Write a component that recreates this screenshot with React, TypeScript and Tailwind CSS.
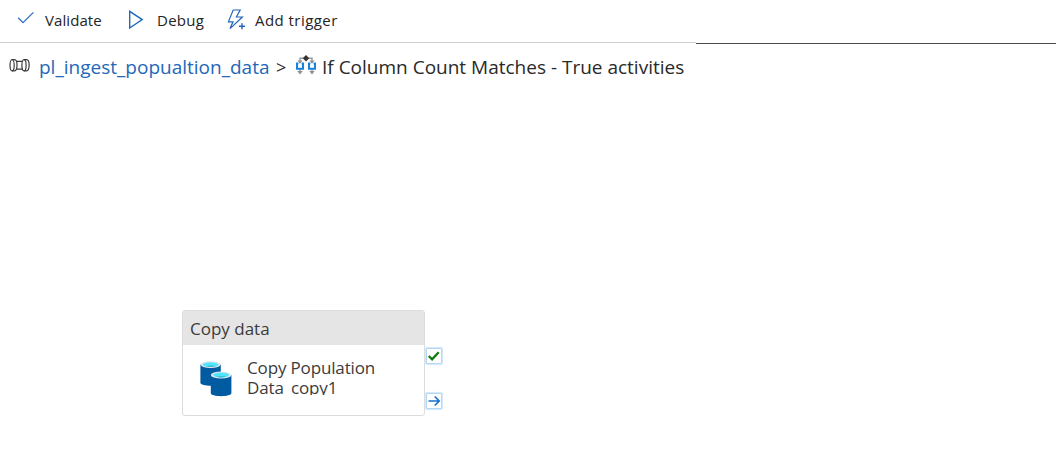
import type { ReactNode } from "react";

function CheckIcon() {
  return (
    <svg width="18" height="14" viewBox="0 0 18 14" fill="none" stroke="#2f6fc0" strokeWidth="1.3">
      <path d="M1.2 6.8 6 11.6 16.4 1.4" />
    </svg>
  );
}

function PlayIcon() {
  return (
    <svg width="16" height="20" viewBox="0 0 16 20" fill="none" stroke="#1f68bd" strokeWidth="1.4">
      <path d="M1.7 1.3V18L14.2 9.6Z" />
    </svg>
  );
}

function TriggerIcon() {
  return (
    <svg width="20" height="22" viewBox="0 0 20 22" fill="none" stroke="#2467b8" strokeWidth="1.2">
      <path d="M6.2 1h7L9.4 8h6L3 19.6 6 12.8H1.4Z" />
      <path d="M15 14.2v6M12 17.2h6" strokeWidth="1.4" />
    </svg>
  );
}

function PipelineIcon() {
  return (
    <svg width="22" height="15" viewBox="0 0 22 15" fill="none" stroke="#3b3b3b" strokeWidth="1.2">
      <ellipse cx="3.1" cy="7.3" rx="2.1" ry="5.6" />
      <path d="M3.1 1.7h2.4c3.4 0 3.4 11.2 0 11.2H3.1M7.6 3.4h6M7.6 11.2h6" />
      <ellipse cx="15" cy="7.3" rx="2.1" ry="5.6" />
      <path d="M15 1.7h2.6c3.4 0 3.4 11.2 0 11.2H15" />
    </svg>
  );
}

function BranchIcon() {
  return (
    <svg width="22" height="20" viewBox="0 0 22 20" fill="none">
      <path d="M5 8V3.2h12V8M5 14v4M17 14v4" stroke="#999" strokeWidth="1.4" />
      <path d="M2.4 5.6h5.2L5 8.8ZM14.4 5.6h5.2L17 8.8ZM2.2 16h5.6L5 19.4ZM14.2 16h5.6L17 19.4Z" fill="#929292" />
      <path d="M11 0 14.2 3.2 11 6.4 7.8 3.2Z" fill="#333" />
      <path d="M3.4 8.6H2v5.2h6V8.6H6.6M15.4 8.6H14v5.2h6V8.6h-1.4" stroke="#1683dc" strokeWidth="2" />
    </svg>
  );
}

function DatabaseIcon() {
  return (
    <svg width="32" height="36" viewBox="0 0 32 36">
      <path d="M.4 3.6v18.2c0 4 20.4 4 20.4 0V3.6Z" fill="#005ba1" />
      <ellipse cx="10.6" cy="3.6" rx="10.2" ry="3.4" fill="#e8e8e8" />
      <ellipse cx="10.6" cy="3.6" rx="8" ry="2.4" fill="#50e6ff" />
      <path d="M5.5 5.2c2.5-1.1 7.7-1.1 10.2 0-2.5 1-7.7 1-10.2 0Z" fill="#3fbbd8" />
      <path d="M10.8 14v18c0 4.2 20.6 4.2 20.6 0V14Z" fill="#005ba1" />
      <ellipse cx="21.1" cy="14" rx="10.3" ry="3.6" fill="#e8e8e8" />
      <ellipse cx="21.1" cy="14" rx="8" ry="2.5" fill="#50e6ff" />
      <path d="M16 15.7c2.5-1.1 7.7-1.1 10.2 0-2.5 1-7.7 1-10.2 0Z" fill="#3fbbd8" />
    </svg>
  );
}

function Port({ children }: { children: ReactNode }) {
  return (
    <div className="flex size-4 items-center justify-center rounded-[1px] border border-[#b3d8f5] bg-white shadow-[0_0_1px_1px_#d0e7fa]">
      {children}
    </div>
  );
}

function Toolbar() {
  return (
    <div className="flex h-[42px] items-center pl-[17px] pb-[2px] text-[15px] text-[#242424]">
      <span className="flex w-[28px] pb-1"><CheckIcon /></span>
      <span className="w-[83px] tracking-[0.08px]">Validate</span>
      <span className="flex w-[29px] pb-[1px]"><PlayIcon /></span>
      <span className="w-[70px] tracking-[0.25px]">Debug</span>
      <span className="flex w-[28px] pb-px"><TriggerIcon /></span>
      <span className="tracking-[0.45px]">Add trigger</span>
    </div>
  );
}

function Breadcrumb() {
  return (
    <div className="flex h-[46px] items-center pl-[9px] text-[19px] text-[#292929]">
      <span className="flex w-[30px] pb-[3px]"><PipelineIcon /></span>
      <span className="w-[237px] text-[#2467b8]">pl_ingest_popualtion_data</span>
      <span className="w-[19px] pt-px text-[18px]">&gt;</span>
      <span className="flex w-[27px] pb-[4px]"><BranchIcon /></span>
      <span>If Column Count Matches - True activities</span>
    </div>
  );
}

function Activity() {
  return (
    <div className="flex">
      <div className="h-[106px] w-[243px] overflow-hidden rounded-[3px] border border-[#dcdcdc] bg-white text-[#3b3b3b]">
        <div className="h-[34px] bg-[#e5e5e5] pl-[7px] text-[17px] leading-[35px]">Copy data</div>
        <div className="flex pt-[13px] pl-[17px]">
          <span className="w-[47px] pt-[3px]"><DatabaseIcon /></span>
          <div className="h-[37px] overflow-hidden text-[17px] leading-5 tracking-[-0.15px]">
            <div>Copy Population</div>
            <div>Data_copy1</div>
          </div>
        </div>
      </div>
      <div className="flex flex-col gap-[29px] pt-[38px] pl-[1px]">
        <Port>
          <svg width="14" height="14" viewBox="0 0 14 14" fill="none">
            <path d="m1.8 7 3.3 3.4 6.6-7.2" stroke="#107c10" strokeWidth="2.3" />
          </svg>
        </Port>
        <Port>
          <svg width="14" height="14" viewBox="0 0 14 14" fill="none" stroke="#1372cb" strokeWidth="1.7">
            <path d="M1.5 7H12M7.7 2.5 12.2 7l-4.5 4.5" />
          </svg>
        </Port>
      </div>
    </div>
  );
}

export default function App() {
  return (
    <div className="h-[476px] w-[1056px] overflow-hidden bg-white font-['Open_Sans',sans-serif] whitespace-nowrap">
      <Toolbar />
      <div className="flex h-[2px]">
        <div className="h-px w-[696px] bg-[#d0d0d0]" />
        <div className="mt-px h-px flex-1 bg-[#4a4a4a]" />
      </div>
      <Breadcrumb />
      <main className="pt-[220px] pl-[182px]">
        <Activity />
      </main>
    </div>
  );
}
